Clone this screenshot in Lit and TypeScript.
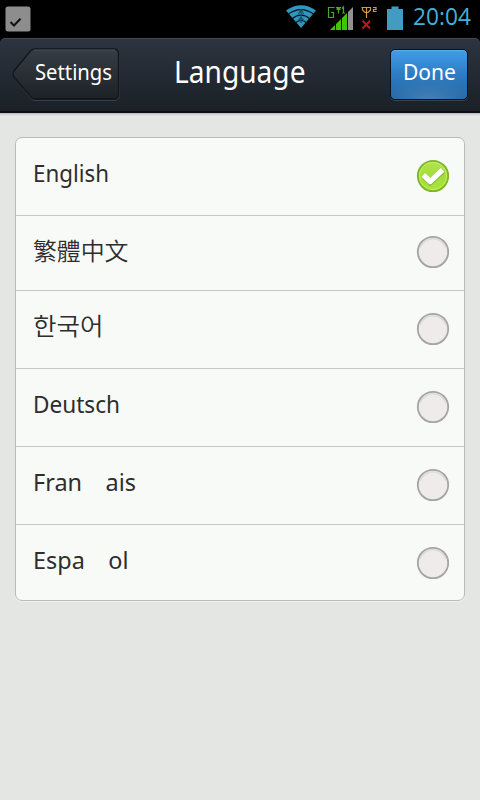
import { LitElement, html, css } from "lit";
import { customElement, property } from "lit/decorators.js";

interface Language {
  name: string;
  height: number;
  width: number;
  baseline: number;
  dot: number;
}

const LANGUAGES: Language[] = [
  { name: "English", height: 78, width: 76, baseline: 44, dot: 38 },
  { name: "繁體中文", height: 75, width: 95.5, baseline: 44, dot: 36 },
  { name: "한국어", height: 78, width: 70.5, baseline: 44, dot: 38 },
  { name: "Deutsch", height: 78, width: 87, baseline: 44, dot: 38 },
  { name: "Fran\u2003ais", height: 78, width: 103, baseline: 44, dot: 38 },
  { name: "Espa\u2003ol", height: 75, width: 95.5, baseline: 44, dot: 38 },
];

@customElement("fit-text")
export class FitText extends LitElement {
  @property() text = "";
  @property({ type: Number }) width = 0;
  @property({ type: Number }) baseline = 0;

  static styles = css`
    :host { display: block; }
    svg { display: block; overflow: visible; }
    text { fill: currentColor; white-space: pre; }
  `;

  render() {
    return html`<svg width=${this.width} height="1">
      <text x="0" y=${this.baseline} textLength=${this.width} lengthAdjust="spacingAndGlyphs">${this.text}</text>
    </svg>`;
  }
}

@customElement("check-dot")
export class CheckDot extends LitElement {
  @property({ type: Boolean }) checked = false;

  static styles = css`
    :host { display: block; width: 34px; height: 34px; }
    svg { display: block; }
  `;

  render() {
    return this.checked
      ? html`<svg width="34" height="34" viewBox="0 0 34 34">
          <defs><linearGradient id="g" x1="0" y1="0" x2="0" y2="1">
            <stop offset="0" stop-color="#b4e250" /><stop offset=".5" stop-color="#a3de38" /><stop offset="1" stop-color="#a9e43c" />
          </linearGradient></defs>
          <circle cx="17" cy="17" r="15.2" fill="url(#g)" stroke="#7fb52a" stroke-width="1.8" />
          <circle cx="17" cy="17" r="13.6" fill="none" stroke="#c3ee62" stroke-width="1" />
          <path d="M7.5 16.6 L14 22.8 L27 10.8" fill="none" stroke="#83b437" stroke-width="5" transform="translate(.3 1)" />
          <path d="M7.3 16 L14.2 22.600 L26.600 10.800" fill="none" stroke="#fff" stroke-width="5.2" stroke-linejoin="round" />
        </svg>`
      : html`<svg width="34" height="34" viewBox="0 0 34 34">
          <circle cx="17" cy="17" r="15.2" fill="#eeebea" stroke="#a5a5a5" stroke-width="1.8" />
          <path d="M4 13 A13.8 13.8 0 0 1 30 13" fill="none" stroke="#dcdada" stroke-width="1.5" />
        </svg>`;
  }
}

@customElement("app-root")
export class AppRoot extends LitElement {
  static styles = css`
    :host {
      display: block;
      width: 480px;
      height: 800px;
      overflow: hidden;
      background: #e4e6e4;
      font-family: "Noto Sans", "Noto Sans CJK TC", "Noto Sans CJK KR", sans-serif;
    }
    .status { display: flex; height: 38px; background: #000; color: #42b0d8; }
    .status svg { display: block; flex: none; }
    .clock { font: 24px "Open Sans", sans-serif; margin-left: 8px; }
    .top { background: #000; }
    .bar {
      display: flex;
      box-sizing: border-box;
      height: 75px;
      border-top: 1px solid #454b55;
      border-bottom: 2px solid #0a0e14;
      border-radius: 5px 5px 0 0;
      background: linear-gradient(#2c343f, #1b2027);
      color: #fff;
    }
    .back { position: relative; width: 108px; height: 54px; margin: 8px 0 0 12px; font-size: 22.5px; }
    .back svg { display: block; }
    .back-label { position: absolute; left: 23px; top: 0; }
    .title { font-size: 30px; margin-left: 54px; width: 132px; }
    .done {
      box-sizing: border-box;
      width: 78px;
      height: 51px;
      margin: 10px 0 0 84px;
      padding-left: 12px;
      border: 1px solid #07111e;
      border-radius: 5px;
      background: radial-gradient(ellipse 50px 22px at 50% 100%, #4481b5, transparent), linear-gradient(#429ce9, #2d7cc3 50%, #1f62a2);
      box-shadow: inset 0 1px 0 #5baeee, 0 1px 0 #39414b;
      font-size: 22.5px;
    }
    .shade { height: 4px; background: linear-gradient(#b8baba, #e4e6e4 70%); }
    .list {
      box-sizing: border-box;
      width: 450px;
      margin: 20px 0 0 15px;
      border: 1px solid #b8babd;
      border-radius: 7px;
      background: #f8faf8;
      box-shadow: 0 1px 0 #f0f1f0;
      color: #2d2d2d;
      font-size: 24px;
    }
    .row {
      display: flex;
      justify-content: space-between;
      box-sizing: border-box;
      padding: 0 14px 0 17px;
      border-bottom: 1px solid #c5c7c6;
    }
    .row:last-child { border-bottom: 0; }
    .cjk { font-family: "Noto Sans CJK TC", "Noto Sans CJK KR", sans-serif; font-weight: 350; }
  `;

  private statusBar() {
    return html`<div class="status">
      <svg width="405" height="38" viewBox="0 0 405 38">
        <rect x="5.5" y="6.5" width="25" height="25" rx="2.5" fill="#8d8d8d" />
        <path d="M10.5 22 L14 25.5 L20.5 18.8" fill="none" stroke="#111" stroke-width="2" />
        <path d="M286 10.500 Q301 0 316 10.500 L301 28 Z" fill="#3196bd" />
        <g fill="none" stroke="#03151d" stroke-width="1.3">
          <path d="M288 14.300 Q301 5 314 14.300" />
          <path d="M292 18.800 Q301 11.500 310 18.800" />
          <path d="M295.500 22.800 Q301 18 306.500 22.800" />
        </g>
        <path d="M301 9 V23 M298.500 14 L301 10 L303.500 14 M298 21 L301 17 L304 21" fill="none" stroke="#17536a" stroke-width="1.3" />
        <path d="M334.500 7.500 H328.500 V17.500 H333.500 V12.500 H331 M336 7.500 H341 M336.500 9.500 L338.500 7.500 L340.500 9.500 M338.500 7 V13.500 M342 8.500 L343.500 7 V13 M342 13 H345" fill="none" stroke="#49a82b" stroke-width="1.2" />
        <path d="M330 30 L335 25 V30 Z M336 30 V24 L341 19 V30 Z M342 30 V18 L347 13 V30 Z" fill="#3fc505" />
        <path d="M348 30 V12 L353 7 V30 Z" fill="#919191" />
        <path d="M361.500 7.500 H371 M362.500 7.500 V10 L365 12.500 H368 L370.500 10 V7.500 M366.500 7 V18 M373 7.500 H376 V9.500 H373.500 V11.500 H376.500" fill="none" stroke="#d99a46" stroke-width="1.2" />
        <path d="M362.500 20.800 L370 28.500 M370 20.800 L362.500 28.500" stroke="#c31318" stroke-width="2" />
        <path d="M391.500 6.500 H398.500 V9 H403 V30 H387 V9 H391.500 Z" fill="#429bc0" />
      </svg>
      <fit-text class="clock" text="20:04" width="58" baseline="25"></fit-text>
    </div>`;
  }

  render() {
    return html`
      ${this.statusBar()}
      <div class="top">
        <div class="bar">
          <div class="back">
            <svg width="108" height="54" viewBox="0 0 108 54">
              <defs><linearGradient id="b" x1="0" y1="0" x2="0" y2="1">
                <stop offset="0" stop-color="#373d45" /><stop offset="1" stop-color="#1c2126" />
              </linearGradient></defs>
              <path d="M23 3 H102 Q107 3 107 8 V49 Q107 54 102 54 H23 Q20 54 18 51 L2 31 Q0 28 2 25 L18 5 Q20 3 23 3 Z" fill="none" stroke="#3a4049" transform="translate(0 -.5)" />
              <path d="M23 2 H102 Q106.500 2 106.500 7 V47 Q106.500 52 102 52 H23 Q20 52 18 49 L2 30 Q0 27 2 24 L18 4.500 Q20 2 23 2 Z" fill="url(#b)" stroke="#12161b" stroke-width="1.3" />
              <path d="M22 3 H103" stroke="#4b5159" />
            </svg>
            <fit-text class="back-label" text="Settings" width="77" baseline="33"></fit-text>
          </div>
          <fit-text class="title" text="Language" width="131.500" baseline="44"></fit-text>
          <div class="done"><fit-text text="Done" width="53" baseline="30"></fit-text></div>
        </div>
      </div>
      <div class="shade"></div>
      <div class="list">
        ${LANGUAGES.map(
          (l, i) => html`<div class="row" style="height:${l.height}px">
            <fit-text class=${i === 1 || i === 2 ? "cjk" : ""} text=${l.name} width=${l.width} baseline=${l.baseline}></fit-text>
            <check-dot ?checked=${i === 0} style="margin-top:${l.dot - 17}px"></check-dot>
          </div>`
        )}
      </div>
    `;
  }
}
